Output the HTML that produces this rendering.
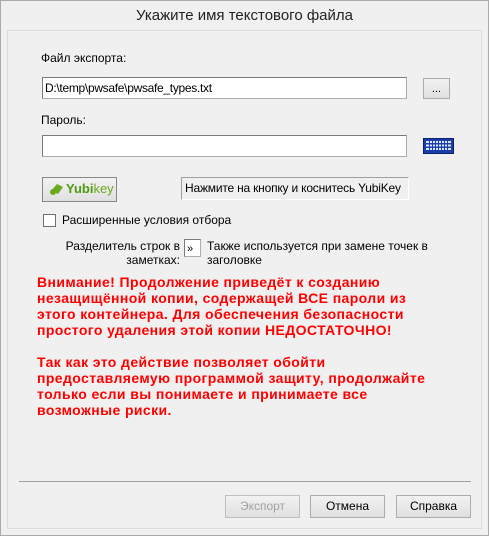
<!DOCTYPE html>
<html><head><meta charset="utf-8"><style>
*{margin:0;padding:0;box-sizing:border-box}
body{width:489px;height:536px;background:#f0f0f0;font-family:"Liberation Sans",sans-serif;font-size:12px;color:#000;position:relative;overflow:hidden}
.a{position:absolute;white-space:nowrap}
.frame{left:0;top:0;width:489px;height:536px;border:1px solid #aaa}
.title{left:0;top:7px;width:489px;text-align:center;font-size:15px;color:#222}
.panel{left:7px;top:30px;width:475px;height:499px;border:1px solid #dcdcdc;background:#f0f0f0}
.inp{background:#fff;border:1px solid #abadb3;border-top-color:#7a7a7a;border-left-color:#7a7a7a}
.btn{background:linear-gradient(#f2f2f2,#e0e0e0);border:1px solid #acacac;text-align:center}
.red{left:37px;top:274px;color:#f00;font-weight:bold;font-size:14px;line-height:16px;letter-spacing:.4px}
</style></head><body>
<div class="a frame"></div>
<div class="a title">Укажите имя текстового файла</div>
<div class="a panel"></div>
<div class="a" style="left:41px;top:51px">Файл экспорта:</div>
<div class="a inp" style="left:42px;top:77px;width:365px;height:22px;padding:2px 2px;line-height:16px;letter-spacing:-.3px">D:\temp\pwsafe\pwsafe_types.txt</div>
<div class="a btn" style="left:423px;top:78px;width:27px;height:21px;line-height:20px;font-size:11px">...</div>
<div class="a" style="left:41px;top:113px">Пароль:</div>
<div class="a inp" style="left:42px;top:135px;width:365px;height:22px"></div>
<svg class="a" style="left:423px;top:138px" width="31" height="16"><rect x="0.5" y="0.5" width="30" height="15" fill="#1b3ea8" stroke="#0a1f6e"/><g fill="#dbe6ff"><rect x="3" y="3" width="25" height="2"/><rect x="3" y="6.5" width="25" height="2"/><rect x="3" y="10" width="25" height="2"/></g><g fill="#1b3ea8"><rect x="6" y="2" width="1" height="11"/><rect x="9" y="2" width="1" height="11"/><rect x="12" y="2" width="1" height="11"/><rect x="15" y="2" width="1" height="11"/><rect x="18" y="2" width="1" height="11"/><rect x="21" y="2" width="1" height="11"/><rect x="24" y="2" width="1" height="11"/></g></svg>
<div class="a btn" style="left:42px;top:177px;width:75px;height:25px;border-color:#888"></div>
<svg class="a" style="left:49px;top:182px" width="16" height="14"><path d="M2 9 L8 2 L14 5 L9 12 Z" fill="#6aab1e"/><circle cx="4" cy="10" r="3" fill="#6aab1e"/></svg>
<div class="a" style="left:66px;top:181px;font-weight:bold;font-size:13px;color:#4f9a10">Yubi<span style="font-weight:normal;color:#6aab1e">key</span></div>
<div class="a" style="left:181px;top:177px;width:228px;height:23px;border:1px solid #a0a0a0;border-right-color:#fff;border-bottom-color:#fff;padding:2px 3px;line-height:16px;letter-spacing:-.2px">Нажмите на кнопку и коснитесь YubiKey</div>
<div class="a" style="left:43px;top:214px;width:13px;height:13px;background:#fff;border:1px solid #707070"></div>
<div class="a" style="left:62px;top:213px">Расширенные условия отбора</div>
<div class="a" style="left:40px;top:239px;width:140px;text-align:right;line-height:14px">Разделитель строк в<br>заметках:</div>
<div class="a inp" style="left:184px;top:239px;width:17px;height:18px;font-size:11px;padding:3px 2px">»</div>
<div class="a" style="left:207px;top:239px;line-height:14px">Также используется при замене точек в<br>заголовке</div>
<div class="a red">Внимание! Продолжение приведёт к созданию<br>незащищённой копии, содержащей ВСЕ пароли из<br>этого контейнера. Для обеспечения безопасности<br>простого удаления этой копии НЕДОСТАТОЧНО!<br><br>Так как это действие позволяет обойти<br>предоставляемую программой защиту, продолжайте<br>только если вы понимаете и принимаете все<br>возможные риски.</div>
<div class="a" style="left:19px;top:481px;width:452px;height:1px;background:#a0a0a0"></div>
<div class="a btn" style="left:225px;top:495px;width:75px;height:23px;line-height:21px;color:#a0a0a0;border-color:#bfbfbf">Экспорт</div>
<div class="a btn" style="left:310px;top:495px;width:75px;height:23px;line-height:21px">Отмена</div>
<div class="a btn" style="left:396px;top:495px;width:75px;height:23px;line-height:21px">Справка</div>
</body></html>
